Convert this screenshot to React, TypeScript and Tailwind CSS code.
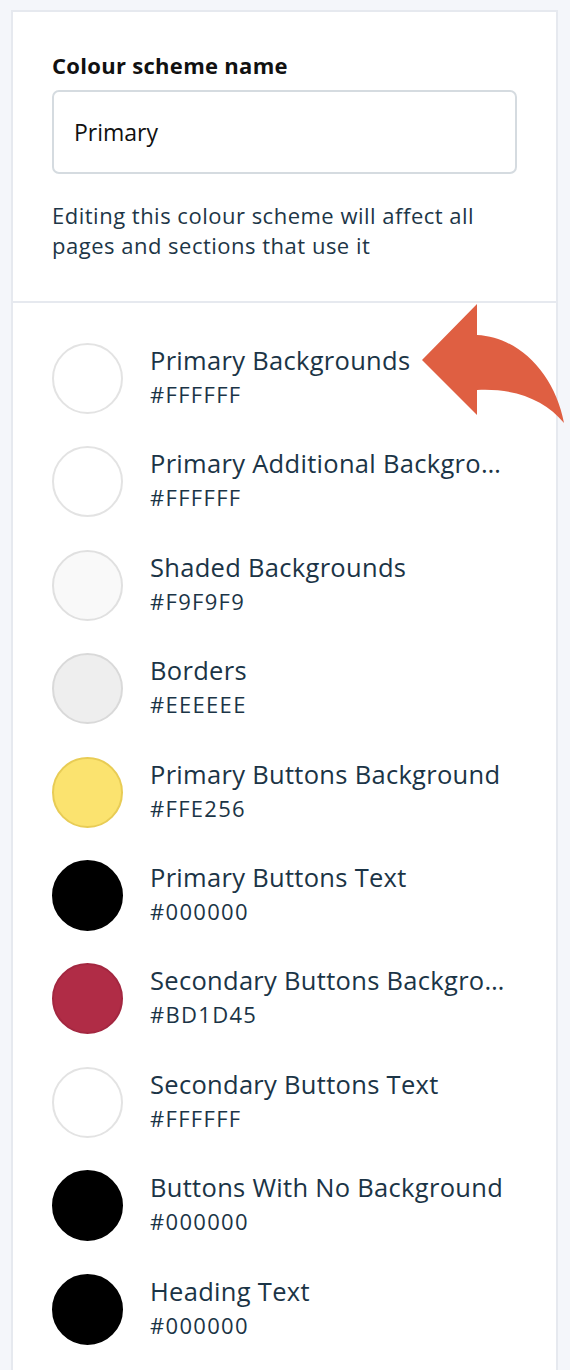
import React from 'react';

const swatches = [
  { name: 'Primary Backgrounds', hex: '#FFFFFF', fill: 'bg-white border-[#e3e3e3]' },
  { name: 'Primary Additional Backgrounds', hex: '#FFFFFF', fill: 'bg-white border-[#e3e3e3]' },
  { name: 'Shaded Backgrounds', hex: '#F9F9F9', fill: 'bg-[#f9f9f9] border-[#e0e0e0]' },
  { name: 'Borders', hex: '#EEEEEE', fill: 'bg-[#eeeeee] border-[#d9d9d9]' },
  { name: 'Primary Buttons Background', hex: '#FFE256', fill: 'bg-[#fbe36f] border-[#e8cc55]' },
  { name: 'Primary Buttons Text', hex: '#000000', fill: 'bg-black border-black' },
  { name: 'Secondary Buttons Background', hex: '#BD1D45', fill: 'bg-[#b02c46] border-[#a32740]' },
  { name: 'Secondary Buttons Text', hex: '#FFFFFF', fill: 'bg-white border-[#e3e3e3]' },
  { name: 'Buttons With No Background', hex: '#000000', fill: 'bg-black border-black' },
  { name: 'Heading Text', hex: '#000000', fill: 'bg-black border-black' },
];

export default function App() {
  return (
    <div
      className="relative min-h-[1370px] bg-[#f4f6fa] pt-[10px] pl-[11px] pr-[12px] overflow-hidden"
      style={{ fontFamily: '"Open Sans", Lato, sans-serif' }}
    >
      <div className="bg-white border-2 border-b-0 border-[#e6e9ef] min-h-[1400px]">
        {/* scheme name */}
        <div className="px-[39px] pt-[40px] pb-[41px] border-b-2 border-[#e6e9ef]">
          <div className="text-[22px] leading-[26px] font-bold tracking-[0.3px] text-[#111]">Colour scheme name</div>
          <div className="mt-[12px] h-[84px] rounded-[7px] border-2 border-[#d5dbe0] flex items-center px-[20px] text-[23px] text-[#111]">
            Primary
          </div>
          <p className="mt-[26px] text-[22px] leading-[30px] tracking-[0.5px] text-[#1d3647]">
            Editing this colour scheme will affect all pages and sections that use it
          </p>
        </div>

        {/* swatches */}
        <div className="px-[39px] pt-[40px] flex flex-col gap-[32.4px]">
          {swatches.map((s) => (
            <div key={s.name} className="flex items-center">
              <div className={`w-[71px] h-[71px] rounded-full border-2 shrink-0 ${s.fill}`} />
              <div className="ml-[27px] min-w-0 w-[357px] -mt-[5px]">
                <div className="text-[25.5px] leading-[32px] tracking-[0.3px] text-[#1b3446] truncate">{s.name}</div>
                <div className="mt-[4px] text-[22px] leading-[28px] tracking-[1.3px] text-[#1b3446]">{s.hex}</div>
              </div>
            </div>
          ))}
        </div>
      </div>

      {/* annotation arrow */}
      <svg
        className="absolute left-0 top-0 pointer-events-none"
        width="570"
        height="450"
        viewBox="0 0 570 450"
      >
        <path
          d="M422 360 L477 304 L477 335 C520 337 555 375 564 423 C545 400 515 388 477 390 L477 415 Z"
          fill="#df5f42"
        />
      </svg>
    </div>
  );
}
